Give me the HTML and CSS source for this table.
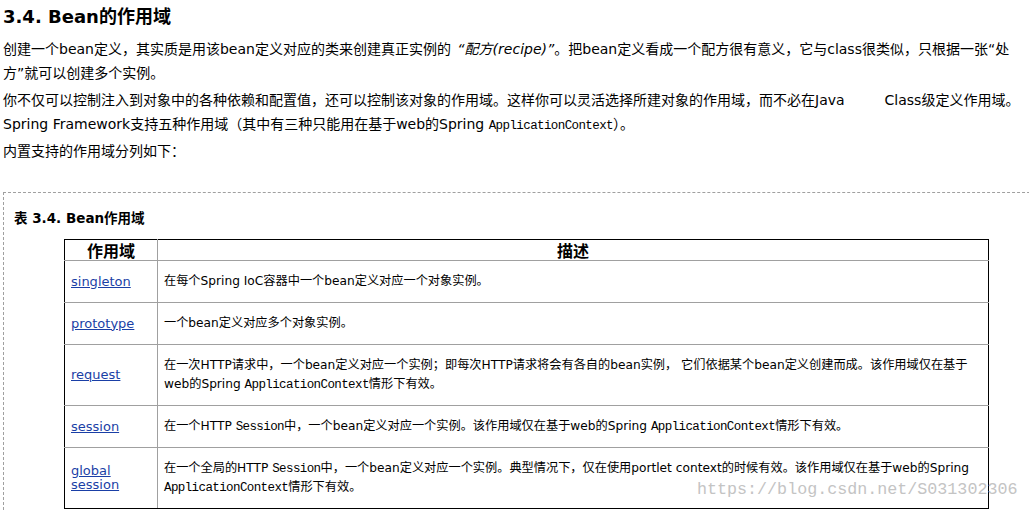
FILE: index.html
```html
<!DOCTYPE html>
<html lang="zh">
<head>
<meta charset="utf-8">
<title>3.4. Bean的作用域</title>
<link rel="stylesheet" href="styles.css">
</head>
<body>
<div class="section">
  <h2 class="title">3.4. Bean的作用域</h2>
  <p class="para">创建一个bean定义，其实质是用该bean定义对应的类来创建真正实例的 <em class="quote">“配方(recipe)”</em>。把bean定义看成一个配方很有意义，它与class很类似，只根据一张“处方”就可以创建多个实例。</p>
  <p class="para">你不仅可以控制注入到对象中的各种依赖和配置值，还可以控制该对象的作用域。这样你可以灵活选择所建对象的作用域，而不必在Java<span class="gap"></span>Class级定义作用域。Spring Framework支持五种作用域（其中有三种只能用在基于web的Spring <code class="mono">ApplicationContext</code>）。</p>
  <p class="para">内置支持的作用域分列如下：</p>

  <div class="table-box">
    <p class="caption">表 3.4. Bean作用域</p>
    <table class="scopes">
      <colgroup><col class="c1"><col class="c2"></colgroup>
      <thead>
        <tr><th>作用域</th><th>描述</th></tr>
      </thead>
      <tbody>
        <tr><td class="name"><a href="#">singleton</a></td><td>在每个Spring IoC容器中一个bean定义对应一个对象实例。</td></tr>
        <tr><td class="name"><a href="#">prototype</a></td><td>一个bean定义对应多个对象实例。</td></tr>
        <tr><td class="name"><a href="#">request</a></td><td>在一次HTTP请求中，一个bean定义对应一个实例；即每次HTTP请求将会有各自的bean实例， 它们依据某个bean定义创建而成。该作用域仅在基于web的Spring <code class="mono">ApplicationContext</code>情形下有效。</td></tr>
        <tr><td class="name"><a href="#">session</a></td><td>在一个HTTP <code class="mono">Session</code>中，一个bean定义对应一个实例。该作用域仅在基于web的Spring <code class="mono">ApplicationContext</code>情形下有效。</td></tr>
        <tr><td class="name"><a href="#">global session</a></td><td>在一个全局的HTTP <code class="mono">Session</code>中，一个bean定义对应一个实例。典型情况下，仅在使用portlet context的时候有效。该作用域仅在基于web的Spring <code class="mono">ApplicationContext</code>情形下有效。</td></tr>
      </tbody>
    </table>
  </div>
</div>
<div class="watermark">https://blog.csdn.net/S031302306</div>
</body>
</html>
```

FILE: styles.css
```css
html, body {
  margin: 0;
  padding: 0;
  overflow: hidden;
  background: #fff;
}
body {
  padding: 5px 3px 0 3px;
  font-family: "DejaVu Sans", "Noto Sans CJK SC", sans-serif;
  color: #000;
  position: relative;
  height: 506px;
}
.section {
  width: 1021px;
}
.title {
  margin: 0;
  font-size: 18px;
  line-height: 24px;
  font-weight: bold;
}
.para {
  margin: 8px 0 3px 0;
  font-size: 14px;
  line-height: 24px;
}
.para + .para {
  margin-top: 0;
}
.quote {
  font-style: italic;
  margin-left: 2px;
}
.gap {
  display: inline-block;
  width: 40px;
}
.mono {
  font-family: "Liberation Mono", "Noto Sans CJK SC", monospace;
  font-size: 12.5px;
  letter-spacing: -0.6px;
  line-height: 1;
}
.table-box {
  margin-top: 29px;
  width: 1060px;
  border: 1px dashed #a0a0a0;
  padding: 16px 0 20px 10px;
}
.caption {
  margin: 0 0 12px 0;
  font-size: 13.5px;
  line-height: 18px;
  font-weight: bold;
}
.scopes {
  margin-left: 50px;
  width: 925px;
  border-collapse: collapse;
  border: 1px solid #000;
  table-layout: fixed;
}
.c1 { width: 93px; }
.scopes th {
  font-family: "Noto Sans CJK SC", sans-serif;
  font-size: 16px;
  font-weight: bold;
  line-height: 20px;
  padding: 0;
  border: 1px solid #a0a0a0;
  border-top-color: #000;
  text-align: center;
}
.scopes th:first-child { border-left-color: #000; }
.scopes th:last-child { border-right-color: #000; }
.scopes td {
  border: 1px solid #a0a0a0;
  padding: 11px 6px;
  font-size: 12.2px;
  line-height: 19px;
  vertical-align: middle;
}
.scopes td:first-child { border-left-color: #000; }
.scopes td:last-child { border-right-color: #000; }
.scopes tr:last-child td { border-bottom-color: #000; }
.scopes td.name {
  font-size: 13px;
  line-height: 14px;
}
.scopes a {
  color: #1a3fa6;
  text-decoration: underline;
}
.watermark {
  position: absolute;
  left: 697px;
  top: 480px;
  font-family: "Liberation Mono", monospace;
  font-size: 16.7px;
  line-height: 20px;
  color: #c4c4c4;
  white-space: nowrap;
}
```
